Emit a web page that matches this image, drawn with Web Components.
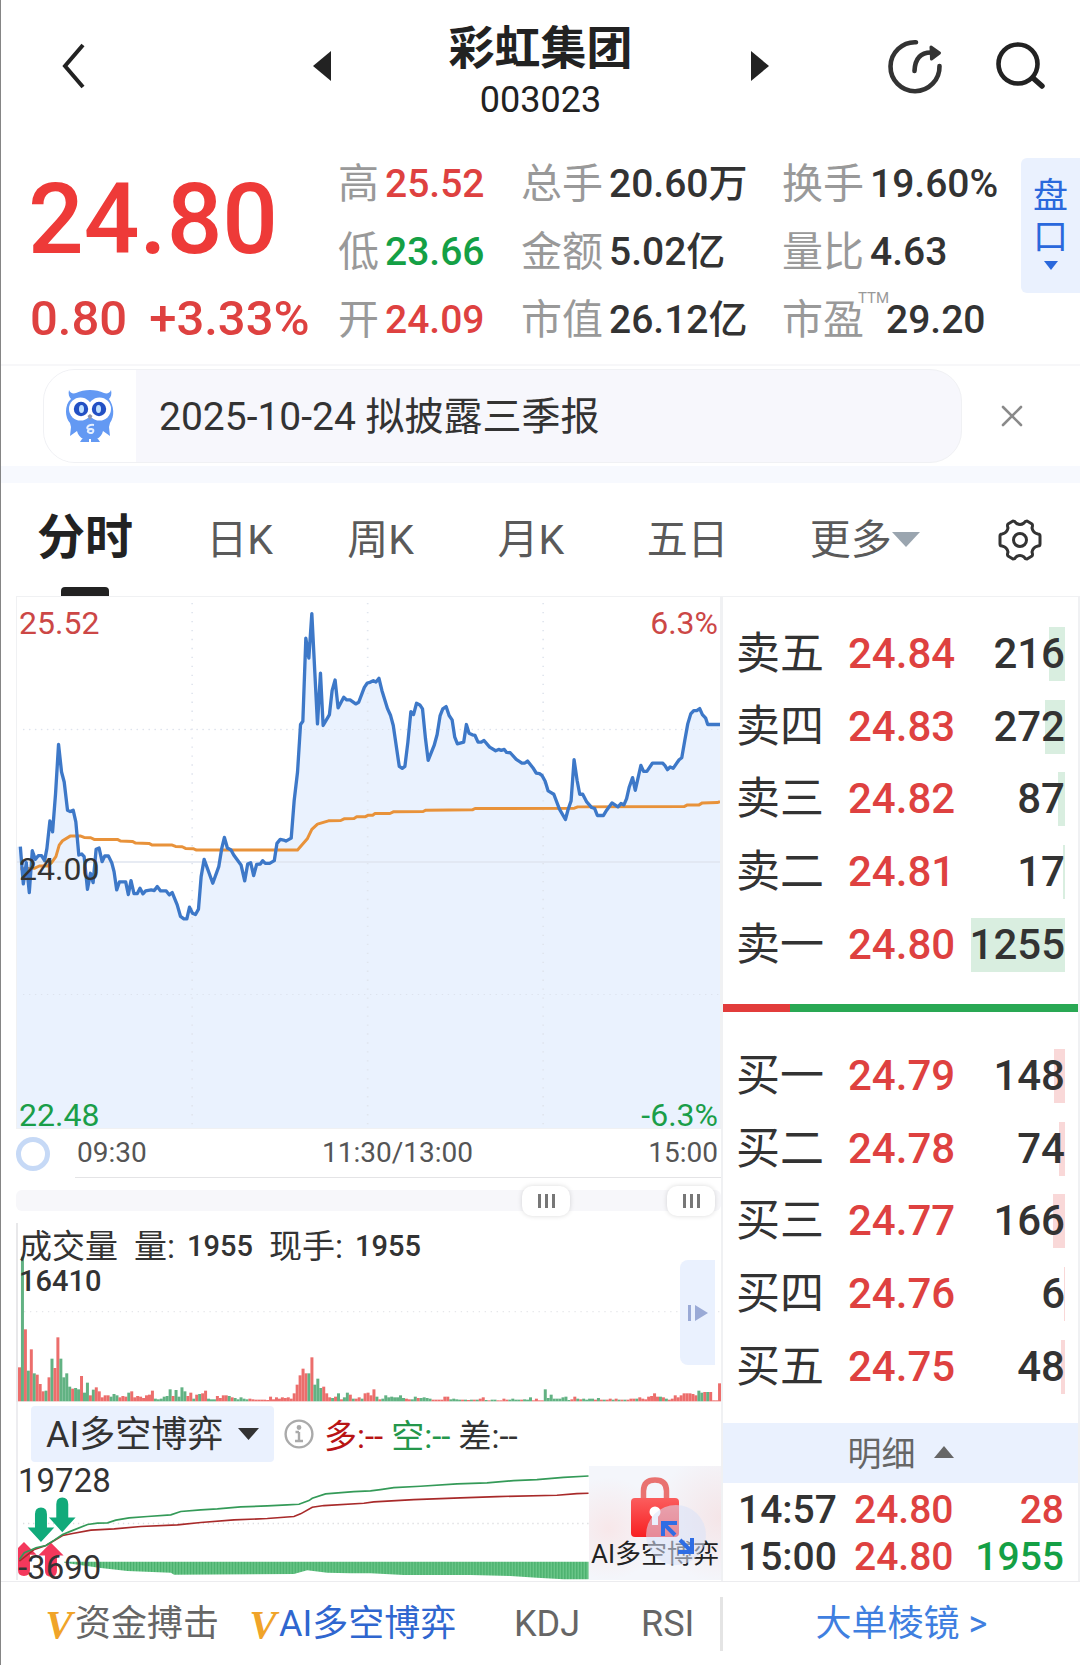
<!DOCTYPE html>
<html lang="zh-CN">
<head>
<meta charset="utf-8">
<meta name="viewport" content="width=device-width, initial-scale=1">
<title>彩虹集团 003023</title>
<style>
:root{
  --sans:Roboto,"Noto Sans CJK SC",sans-serif;
  --num:Roboto,"Noto Sans CJK SC",sans-serif;
  --ink:#333;--dark:#222;--mute:#999;--grey:#5a5a5a;
  --red:#de4140;--green:#14a045;--blue:#2a68dc;--tint:#eaf1fe;--line:#f0f1f3;
}
html,body{margin:0;background:#fff}
body{font-family:var(--sans);color:var(--ink)}
</style>
</head>
<body>
<stock-page></stock-page>
<script>
const base = `
  *{box-sizing:border-box}
  :host{display:block}
  button{font:inherit;color:inherit;background:none;border:0;padding:0;margin:0;cursor:pointer}
  a{color:inherit;text-decoration:none}
  svg{display:block}
`;
function define(name, css, html, setup){
  const tpl = document.createElement('template');
  tpl.innerHTML = `<style>${base}${css}</style>${html}`;
  customElements.define(name, class extends HTMLElement{
    constructor(){
      super();
      this.attachShadow({mode:'open'}).append(tpl.content.cloneNode(true));
    }
    connectedCallback(){
      if(setup && !this.ready){ this.ready = true; setup(this.shadowRoot, this); }
    }
  });
}

/* Header */
define('stock-header', `
  header{display:grid;grid-template-columns:1fr auto 1fr;align-items:center;height:140px;padding:0 34px 8px;color:var(--dark)}
  .back{justify-self:start;margin-left:26px}
  .name{display:flex;align-items:center;gap:118px}
  .title{text-align:center;padding-top:14px}
  h1{margin:0;font-size:46px;line-height:54px;font-weight:700}
  p{margin:0;font-size:36px;line-height:50px}
  .tools{display:flex;justify-content:flex-end;gap:52px}
`, `
  <header>
    <button class="back" aria-label="返回"><svg width="26" height="46" viewBox="0 0 26 46" fill="none" stroke="#222" stroke-width="4"><path d="M22 2 4 23 22 44"/></svg></button>
    <div class="name">
      <button aria-label="上一只"><svg width="18" height="30" viewBox="0 0 18 30"><path fill="#222" d="M18 0v30L0 15z"/></svg></button>
      <div class="title"><h1>彩虹集团</h1><p>003023</p></div>
      <button aria-label="下一只"><svg width="18" height="30" viewBox="0 0 18 30"><path fill="#222" d="M0 0v30l18-15z"/></svg></button>
    </div>
    <div class="tools">
      <button aria-label="分享"><svg width="56" height="56" viewBox="0 0 56 56" fill="none" stroke="#333" stroke-width="4.6" stroke-linecap="round"><path d="M28 4.200A24.500 24.500 0 1 0 51.500 28"/><path d="M26.500 33C27 20 33 14.500 43 14.500"/><path d="M43 9 51.500 15 43.500 21z" fill="#333" stroke-width="3" stroke-linejoin="round"/></svg></button>
      <button aria-label="搜索"><svg width="50" height="50" viewBox="0 0 50 50" fill="none" stroke="#222" stroke-width="4.600" stroke-linecap="round"><circle cx="22" cy="23" r="19.500"/><path d="m37 37 9 8" stroke-width="5.500"/></svg></button>
    </div>
  </header>
`);

/* One label and value of the quote grid */
define('quote-stat', `
  :host{display:flex;align-items:center;gap:6px;line-height:60px;white-space:nowrap}
  :host([tone=up]) .v{color:var(--red)}
  :host([tone=down]) .v{color:var(--green)}
  .k{position:relative;color:var(--mute);font-size:41px}
  .v{color:var(--ink);font:500 39px/60px var(--num)}
  sup{position:absolute;left:100%;top:0;margin-left:-6px;font-size:15px;line-height:16px}
  :host([note]) .v{margin-left:16px}
`, `<span class="k"><slot name="label"></slot></span><span class="v"><slot></slot></span>`, (root, host) => {
  if(host.hasAttribute('note')){
    const s = document.createElement('sup');
    s.textContent = host.getAttribute('note');
    root.querySelector('.k').append(s);
  }
});

define('quote-board', `
  section{display:grid;grid-template-columns:310px 1fr 59px;height:224px;padding-left:27px}
  .price{display:flex;flex-direction:column;padding-top:24px;color:#ee3a38;font-family:var(--num);font-weight:500}
  .last{font-size:98px;line-height:112px}
  .chg{display:flex;gap:22px;color:var(--red);font-size:49px;line-height:64px;padding:11px 0 0 2px}
  .stats{display:grid;grid-template-columns:183px 261px auto;justify-content:start;align-content:start;row-gap:8px;padding-top:14px}
  .side{display:flex;flex-direction:column;align-items:center;justify-content:center;gap:6px;width:59px;height:135px;margin-top:18px;padding-bottom:3px;background:var(--tint);border-radius:6px 0 0 6px;color:var(--blue);font-size:35px;line-height:35px}
`, `
  <section>
    <div class="price"><span class="last">24.80</span><div class="chg"><span>0.80</span><span>+3.33%</span></div></div>
    <div class="stats">
      <quote-stat tone="up"><span slot="label">高</span>25.52</quote-stat>
      <quote-stat><span slot="label">总手</span>20.60万</quote-stat>
      <quote-stat><span slot="label">换手</span>19.60%</quote-stat>
      <quote-stat tone="down"><span slot="label">低</span>23.66</quote-stat>
      <quote-stat><span slot="label">金额</span>5.02亿</quote-stat>
      <quote-stat><span slot="label">量比</span>4.63</quote-stat>
      <quote-stat tone="up"><span slot="label">开</span>24.09</quote-stat>
      <quote-stat><span slot="label">市值</span>26.12亿</quote-stat>
      <quote-stat note="TTM"><span slot="label">市盈</span>29.20</quote-stat>
    </div>
    <button class="side"><span>盘</span><span>口</span><svg width="14" height="9" viewBox="0 0 14 9"><path fill="#2a68dc" d="M0 0h14L7 9z"/></svg></button>
  </section>
`);

/* Announcement strip */
define('news-strip', `
  aside{display:flex;align-items:center;height:102px;padding:0 56px 0 42px;border-top:2px solid #f7f7f9;gap:38px}
  a{flex:1;display:flex;height:94px;border:1px solid #f0f1f4;border-radius:32px;overflow:hidden;background:#f7f7fc}
  .owl{width:92px;display:grid;place-items:center;background:#fff}
  .txt{padding-left:23px;font-size:39px;line-height:95px}
  .band{height:17px;background:#f7f9fe}
`, `
  <aside>
    <a href="#news"><span class="owl"><svg width="54" height="58" viewBox="0 0 54 58">
      <path fill="#6399f3" d="M6 3c1 3 4 4 7 3 8-4 20-4 28 0 3 1 6 0 7-3 1 4 0 7-2 9 5 7 6 17 1 24l-1 4 1 9-7-5c-1 4-3 6-6 8h1l2 3h-9v-3h-2v3h-9l2-3h1c-3-2-5-4-6-8l-7 5 1-9-1-4C2 31 1 18 8 12 6 10 5 7 6 3z"/>
      <circle cx="17.500" cy="22" r="11.500" fill="#fff"/><circle cx="36.500" cy="22" r="11.500" fill="#fff"/>
      <circle cx="18" cy="22" r="7.200" fill="#2250c4"/><circle cx="36" cy="22" r="7.200" fill="#2250c4"/>
      <ellipse cx="18.500" cy="22" rx="2.500" ry="4" fill="#bfe0ff"/><ellipse cx="35.500" cy="22" rx="2.500" ry="4" fill="#bfe0ff"/>
      <path fill="#8d93a8" d="m24.500 29 2.500-2 2.500 2-2.500 4z"/>
      <path d="M31 38c-7-1-9 5-4 4s4 5 0 4-2-4 2-4" fill="none" stroke="#e6f0ff" stroke-width="2"/>
    </svg></span><span class="txt">2025-10-24 拟披露三季报</span></a>
    <button aria-label="关闭"><svg width="24" height="24" viewBox="0 0 24 24" stroke="#8a8a8a" stroke-width="2.600" stroke-linecap="round"><path d="m3 3 18 18M21 3 3 21"/></svg></button>
  </aside>
  <div class="band"></div>
`);

/* Chart period tabs */
define('period-tabs', `
  nav{display:grid;grid-template-columns:169fr 141fr 150fr 149fr 163fr 188fr 44px;align-items:stretch;height:113px;padding:0 38px 0 36px;color:var(--grey);font-size:41px;line-height:110px}
  button{display:flex;align-items:center;justify-self:start}
  .on{flex-direction:column;color:#222;font-size:48px;font-weight:700}
  .on i{width:48px;height:9px;border-radius:4px 4px 0 0;background:#222;margin-top:-6px}
`, `
  <nav>
    <button class="on">分时<i></i></button><button>日K</button><button>周K</button><button>月K</button><button>五日</button>
    <button>更多<svg width="28" height="15" viewBox="0 0 28 15"><path fill="#9aa5af" d="M0 0h28L14 15z"/></svg></button>
    <button aria-label="设置"><svg width="44" height="44" viewBox="0 0 44 44" fill="none" stroke="#333" stroke-width="3" stroke-linejoin="round"><path d="M15 3q2 0 3 2 4 3 8 0 1-2 3-2l5 3q1 1 0 4 1 5 6 6 2 0 2 2v8q0 2-2 2-5 1-6 6 1 3 0 4l-5 3q-2 0-3-2-4-3-8 0-1 2-3 2l-5-3q-1-1 0-4-1-5-6-6-2 0-2-2v-8q0-2 2-2 5-1 6-6-1-3 0-4z"/><circle cx="22" cy="22" r="6.500"/></svg></button>
  </nav>
`);

/* Intraday price line with its average */
define('price-chart', `
  figure{display:grid;margin:0;height:533px;border:1px solid var(--line)}
  svg,.lab{grid-area:1/1}
  svg{width:100%;height:531px}
  .lab{display:flex;flex-direction:column;justify-content:space-between;padding:11px 2px 0;height:533px;font:32px/30px var(--num)}
  .lab div{display:flex;justify-content:space-between}
  .up{color:#cc4746}.dn{color:#1a9e49}
  .axis{display:flex;align-items:center;gap:25px;height:49px;color:#555;font:28px/48px var(--num)}
  .ring{width:34px;height:34px;border:5px solid #c6d9f6;border-radius:50%}
  .t{flex:1;display:flex;justify-content:space-between;border-bottom:1px solid #e4e4e6;padding:0 3px 0 2px;height:49px}
`, `
  <figure>
    <svg viewBox="48 18 2115 1599" preserveAspectRatio="none" fill="none">
      <g stroke="#eaebef" stroke-width="4" stroke-dasharray="4 14"><path d="M66 417H2160"/><path d="M66 1215H2160"/></g>
      <path class="area" fill="#eaf2fe"/>
      <g stroke="#e0e5ee" stroke-width="5" stroke-dasharray="4 23"><path d="M575 36V1610M1103 36V1610M1631 36V1610"/></g>
      <path stroke="#dde3ee" stroke-width="3" stroke-dasharray="4 14" d="M66 417H2160M66 1215H2160"/>
      <path stroke="#dfe5ef" stroke-width="4" d="M48 816H2163"/>
      <path class="avg" stroke="#e8923a" stroke-width="9" stroke-linejoin="round"/>
      <path class="px" stroke="#3d78c8" stroke-width="10" stroke-linejoin="round"/>
    </svg>
    <div class="lab">
      <div><span class="up">25.52</span><span class="up">6.3%</span></div>
      <div><span>24.00</span></div>
      <div><span class="dn">22.48</span><span class="dn">-6.3%</span></div>
    </div>
  </figure>
  <div class="axis"><span class="ring"></span><div class="t"><span>09:30</span><span>11:30/13:00</span><span>15:00</span></div></div>
`, root => {
  const am = '58,770 67,882 76,818 85,908 94,782 103,808 112,797 122,797 131,812 138,775 147,692 155,725 164,610 173,462 182,545 190,575 200,660 208,664 217,660 225,695 234,795 243,792 250,800 260,898 269,850 277,878 286,778 295,774 304,815 312,798 323,798 333,818 340,845 348,900 356,876 375,876 383,914 391,872 400,911 410,911 418,895 427,912 435,903 452,900 461,902 470,890 480,903 497,903 506,915 515,908 530,945 540,980 550,987 559,987 567,952 576,970 585,974 594,958 602,860 611,808 637,880 655,830 664,775 672,742 681,774 692,780 700,795 722,825 733,873 742,822 751,818 760,857 769,823 780,822 787,812 795,820 808,820 822,812 830,760 840,748 850,750 857,753 873,744 882,630 892,545 901,402 908,392 917,142 926,202 935,68 944,245 952,400 961,247 969,405 988,372 996,300 1005,268 1014,352 1031,320 1040,328 1050,328 1067,340 1076,335 1093,290 1102,277';
  const pm = '0,275 10,270 18,274 27,263 36,300 53,355 62,375 70,405 88,528 97,534 105,528 114,455 123,363 131,372 140,338 150,343 158,355 167,445 175,510 193,465 202,432 211,375 219,355 229,348 238,375 247,388 255,440 263,460 282,455 290,402 298,428 308,433 316,435 325,455 335,455 343,450 360,470 378,481 387,477 395,480 404,477 411,486 422,487 440,507 457,518 466,518 474,512 490,532 500,548 510,550 518,556 527,573 536,602 553,612 570,657 588,688 596,658 605,632 614,508 623,570 631,612 640,612 652,635 667,652 676,655 684,676 702,676 712,660 728,638 746,650 755,640 764,644 772,625 780,590 790,562 798,600 815,525 823,543 833,543 850,518 880,518 887,525 895,538 903,530 912,534 930,508 938,502 947,450 956,400 965,370 974,360 983,360 992,354 1000,372 1010,383 1016,402 1053,402';
  const avgAm = '58,836 100,835 115,828 140,828 152,818 165,800 175,765 185,752 208,738 240,738 250,742 270,743 280,748 350,748 360,753 395,754 405,759 445,760 455,765 515,765 525,769 545,770 555,775 578,776 588,780 892,780 922,745 935,718 952,702 985,692 1022,691 1032,686 1062,685 1070,680 1095,680 1105,675';
  const avgPm = '8,675 15,670 60,670 70,665 160,664 168,660 308,659 316,655 615,654 625,650 945,649 955,644 990,644 1000,638 1045,637 1053,634';
  const shift = s => s.split(' ').map(p => { const [x, y] = p.split(','); return (+x + 1110) + ',' + y; }).join(' ');
  const px = 'M' + am + ' ' + shift(pm);
  root.querySelector('.px').setAttribute('d', px);
  root.querySelector('.area').setAttribute('d', px + 'V1617H48V770Z');
  root.querySelector('.avg').setAttribute('d', 'M' + avgAm + ' ' + shift(avgPm));
});

/* Two-handled time range */
define('range-slider', `
  :host{height:45px;display:grid;align-items:center}
  .track{grid-area:1/1;height:21px;border-radius:6px;background:#f7f7fa}
  input{grid-area:1/1;appearance:none;width:calc(100% - 2px);height:32px;margin:0;background:none;pointer-events:none;outline:0}
  input::-webkit-slider-thumb{appearance:none;pointer-events:auto;width:48px;height:30px;border-radius:10px;box-shadow:0 0 5px #00000026;
    background:linear-gradient(90deg,#777 3px,#fff 3px 7px,#777 7px 10px,#fff 10px 14px,#777 14px) center/17px 14px no-repeat #fff}
`, `<div class="track"></div>
  <input type="range" min="0" max="1000" value="773" aria-label="起始时间">
  <input type="range" min="0" max="1000" value="994" aria-label="结束时间">`);

/* Volume bars */
define('volume-chart', `
  figure{display:grid;margin:0;height:179px;border-left:2px solid #e8e8ea}
  figure>*{grid-area:1/1}
  figure>svg{width:100%;height:179px}
  figcaption{font-size:33px;line-height:35px;padding:6px 0 0 1px}
  .r{display:flex;gap:16px}
  .r span{display:flex;gap:12px}
  b{display:block;font:500 29px/35px var(--num)}
  .more{justify-self:end;align-self:start;margin:37px 6px 0 0;width:35px;height:105px;border-radius:8px 0 0 8px;background:var(--tint);display:grid;place-items:center}
`, `
  <figure>
    <svg viewBox="48 399 2115 537" preserveAspectRatio="none"><path d="M66 665H2160" stroke="#e6e7ea" stroke-width="4" stroke-dasharray="4 14"/><g class="bars"></g></svg>
    <figcaption><div class="r"><span>成交量</span><span>量: <b>1955</b></span><span>现手: <b>1955</b></span></div><b>16410</b></figcaption>
    <button class="more" aria-label="展开"><svg width="22" height="16" viewBox="0 0 22 16" fill="#9aaad6"><path d="M1 0h3v16H1zM8 0l13 8-13 8z"/></svg></button>
  </figure>
`, root => {
  // Positive heights are up minutes, negative heights are down minutes.
  const v = [102,-434,216,-92,156,-84,80,52,30,-32,72,-128,100,192,-128,-72,-84,-44,38,-40,-36,76,-26,-56,18,-35,42,30,12,18,18,-14,-22,-18,12,16,14,-26,30,12,16,14,10,18,20,32,-8,-6,-8,-14,-16,-36,16,-34,-14,-42,-30,16,26,-8,20,-22,24,32,-8,-6,-6,16,10,18,18,-16,12,-10,-6,-12,-8,-6,8,6,5,5,5,5,4,14,6,12,8,12,10,12,8,24,50,78,98,84,-84,132,-50,-68,-40,44,24,12,-10,14,-24,6,-12,-26,20,-8,8,12,-8,24,26,18,36,-14,6,-8,-18,-12,-14,-12,-12,-18,-10,8,6,-6,-14,10,-10,-12,-10,-8,5,5,5,5,14,14,-6,-8,-6,-5,5,-5,4,-5,5,-5,8,12,-4,3,-5,-5,3,3,8,5,-5,-8,-5,-5,5,-6,-5,-12,3,8,3,3,-36,-10,-20,-8,-8,-8,-12,-14,-4,6,14,-8,6,-8,-5,-8,-8,5,-10,5,-5,5,8,-5,8,-5,5,-5,5,8,8,-8,12,8,6,14,16,24,14,-14,12,-8,5,8,18,12,18,24,24,24,22,18,-32,-26,28,-28,28,3,3,54];
  const g = root.querySelector('.bars');
  v.forEach((h, i) => {
    const r = document.createElementNS('http://www.w3.org/2000/svg', 'rect');
    r.setAttribute('x', 48 + i * 2115 / v.length);
    r.setAttribute('y', 934 - Math.abs(h));
    r.setAttribute('width', 9);
    r.setAttribute('height', Math.abs(h));
    r.setAttribute('fill', h > 0 ? '#ec6e6c' : '#62b283');
    g.append(r);
  });
});

/* AI long/short indicator */
define('ai-chart', `
  :host{border-left:2px solid #ededf0}
  .bar{display:flex;align-items:center;height:64px;padding:0 0 1px 13px;font-size:33px}
  .pick{position:relative;display:flex;align-items:center}
  select{appearance:none;border:0;border-radius:4px;width:243px;height:56px;padding:3px 0 0 15px;background:var(--tint);color:var(--ink);font:36px var(--sans)}
  .pick svg{position:absolute;right:15px;pointer-events:none}
  .info{margin:0 10px 0 10px}
  .vals{display:flex;gap:8px}
  .a{color:#b81414}.b{color:#24974b}
  figure{display:grid;margin:0;height:114px;grid-template-columns:1fr 132px}
  .plot{grid-area:1/1/2/3;width:100%;height:114px}
  .lab{grid-area:1/1;display:flex;flex-direction:column;justify-content:space-between;height:117px;font-size:33px;line-height:30px}
  .lock{grid-area:1/2;position:relative;display:flex;flex-direction:column;align-items:center;height:114px;padding-top:11px;color:#222;font-size:26px;line-height:32px;
    background:radial-gradient(circle at 100% 45%,#f5d4d480,transparent 45%),radial-gradient(circle at 15% 55%,#fadcdc90,transparent 40%),#f4f6fb;white-space:nowrap}
  .lock .full{position:absolute;left:57px;top:39px}
`, `
  <div class="bar">
    <label class="pick"><select aria-label="指标"><option>AI多空博弈</option></select><svg width="21" height="12" viewBox="0 0 21 12"><path fill="#333" d="M0 0h21L10.500 12z"/></svg></label>
    <svg class="info" width="30" height="30" viewBox="0 0 30 30" fill="none" stroke="#aaa" stroke-width="2.400"><circle cx="15" cy="15" r="13.400"/><path d="M15 13v9M11.500 13H15M11 22h8"/><circle cx="15" cy="8.500" r="1.200" fill="#aaa"/></svg>
    <div class="vals"><span class="a">多:--</span><span class="b">空:--</span><span>差:--</span></div>
  </div>
  <figure>
    <svg class="plot" viewBox="51 199 2112 343" preserveAspectRatio="none" fill="none">
      <defs><pattern id="stripe" width="9" height="60" patternUnits="userSpaceOnUse"><rect width="9" height="60" fill="#6cc78a"/><rect width="4" height="60" fill="#45ad69"/></pattern></defs>
      <path d="M66 372H1765" stroke="#dcdde0" stroke-width="4" stroke-dasharray="4 11"/>
      <path d="M0-52 38-14H18V32Q18 50 0 50T-18 32V-14H-38z" fill="#f4385c" transform="translate(69 480)"/>
      <path d="M0-52 38-14H18V32Q18 50 0 50T-18 32V-14H-38z" fill="#f4385c" transform="translate(150 482)"/>
      <path d="M-18-32Q-18-52 0-52T18-32V8H40L0 52-40 8H-18z" fill="#11aa7a" transform="translate(120 376)"/>
      <path d="M-18-32Q-18-52 0-52T18-32V8H40L0 52-40 8H-18z" fill="#11aa7a" transform="translate(184 346)"/>
      <path fill="url(#stripe)" d="M190 487H1765V540H1690L1610 535 1530 530 1410 527H1210L1110 522 1050 522 980 520 920 513 880 524 520 526 510 520 380 515 300 506 190 490z"/>
      <path stroke="#a82a2a" stroke-width="5" d="M55 485 100 450 135 438 185 408 215 402 270 392 340 388 420 381 530 376 600 369 700 361 800 357 880 351 900 343 935 323 970 318 1090 311 1120 307 1240 300 1380 295 1490 291 1670 287 1730 282 1765 281"/>
      <path stroke="#349a58" stroke-width="5" d="M55 480 70 460 90 452 105 445 135 438 160 422 185 405 210 395 260 375 290 371 320 370 345 362 385 355 440 351 510 346 540 336 600 331 650 328 720 322 800 319 860 316 895 314 925 303 935 296 975 283 1060 276 1110 274 1140 270 1180 264 1260 260 1370 253 1460 250 1540 243 1610 240 1690 233 1765 229"/>
    </svg>
    <div class="lab"><span>19728</span><span>-3690</span></div>
    <div class="lock">
      <svg width="50" height="61" viewBox="0 0 50 61"><defs><linearGradient id="lk" x2="0" y2="1"><stop stop-color="#fb5d5d"/><stop offset="1" stop-color="#f81f22"/></linearGradient></defs><path d="M13.500 24V14q0-11 11.500-11t11.500 11v10" fill="none" stroke="#e97270" stroke-width="5.500"/><rect x="1" y="21" width="48" height="39" rx="4" fill="url(#lk)"/><circle cx="25" cy="35" r="5.500" fill="#fff"/><path d="M22 37h6v11h-6z" fill="#fff"/></svg>
      <span>AI多空博弈</span>
      <svg class="full" width="60" height="60" viewBox="0 0 60 60"><circle cx="30" cy="30" r="30" fill="#d8e2f8" opacity=".55"/><path d="M17 31V18h14M18 19l11 11M32 47h14V33M45 46 34 35" fill="none" stroke="#2f6de4" stroke-width="4"/></svg>
    </div>
  </figure>
`);

/* Five levels of asks and bids */
define('order-book', `
  table{width:100%;height:363px;border-collapse:collapse;table-layout:fixed}
  .ask{margin-top:21px}
  th,td{padding:0;font-weight:500;text-align:left;font-size:42px;line-height:54px;font-family:var(--num);white-space:nowrap}
  th{width:125px;padding-left:13px;font-family:var(--sans);font-size:44px;font-weight:400}
  td.p{width:112px;color:var(--red)}
  td.q{padding-right:13px}
  .q span{display:block;text-align:right;background:linear-gradient(var(--depth),var(--depth)) right/var(--w) 54px no-repeat}
  .ask{--depth:#d9eee0}.bid{--depth:#f9d8d8}
  .ratio{display:flex;height:8px;margin:23px 0 28px}
  .ratio i{width:19%;background:#e23c3b}.ratio i+i{flex:1;background:#29a854}
`, `
  <table class="ask" aria-label="卖盘"></table>
  <div class="ratio"><i></i><i></i></div>
  <table class="bid" aria-label="买盘"></table>
`, root => {
  const row = ([n, p, q, w]) => `<tr><th scope="row">${n}</th><td class="p">${p}</td><td class="q"><span style="--w:${w}px">${q}</span></td></tr>`;
  root.querySelector('.ask').innerHTML = [['卖五','24.84',216,16],['卖四','24.83',272,20],['卖三','24.82',87,7],['卖二','24.81',17,2],['卖一','24.80',1255,94]].map(row).join('');
  root.querySelector('.bid').innerHTML = [['买一','24.79',148,11],['买二','24.78',74,6],['买三','24.77',166,12],['买四','24.76',6,1],['买五','24.75',48,4]].map(row).join('');
});

/* Latest trades */
define('trade-list', `
  :host{margin-top:20px}
  button{display:flex;width:100%;height:60px;align-items:center;justify-content:center;gap:18px;padding-bottom:3px;background:var(--tint);color:#666;font-size:34px}
  table{width:100%;border-collapse:collapse;table-layout:fixed;margin-top:4px}
  td{padding:0;font:500 39px/47px var(--num);height:47px}
  td:nth-child(1){padding-left:15px;width:131px}
  td:nth-child(2){width:110px;color:var(--red)}
  td:nth-child(3){text-align:right;padding-right:14px}
  td.up{color:var(--red)}td.dn{color:var(--green)}
`, `
  <button>明细<svg width="20" height="12" viewBox="0 0 20 12"><path fill="#666" d="M0 12h20L10 0z"/></svg></button>
  <table aria-label="成交明细">
    <tr><td>14:57</td><td>24.80</td><td class="up">28</td></tr>
    <tr><td>15:00</td><td>24.80</td><td class="dn">1955</td></tr>
  </table>
`);

/* Indicator switcher at the foot */
define('indicator-tabs', `
  nav{display:grid;grid-template-columns:722px 1fr;height:83px;align-items:center;color:#666;font-size:36px}
  .l{display:grid;grid-template-columns:204px 267px 127px 1fr;padding-left:42px;height:54px;align-items:center;border-right:3px solid #e4e4e4}
  .l button{display:flex;align-items:center;line-height:54px}
  .on{color:#2f66cf}
  b{width:32px;color:#f0a429;font:italic 700 41px/54px "Liberation Serif",serif}
  a{color:#3f7fe0;text-align:center;line-height:54px}
`, `
  <nav>
    <div class="l"><button><b>V</b>资金搏击</button><button class="on"><b>V</b>AI多空博弈</button><button>KDJ</button><button>RSI</button></div>
    <a href="#prism">大单棱镜 &gt;</a>
  </nav>
`);

define('stock-page', `
  :host{border-left:1px solid #858585}
  main{display:grid;grid-template-columns:705fr 359fr;padding-left:15px;border-bottom:1px solid #ececef}
  .right{border:1px solid var(--line);border-width:1px 2px 0}
`, `
  <stock-header></stock-header>
  <quote-board></quote-board>
  <news-strip></news-strip>
  <period-tabs></period-tabs>
  <main>
    <div class="left"><price-chart></price-chart><range-slider></range-slider><volume-chart></volume-chart><ai-chart></ai-chart></div>
    <div class="right"><order-book></order-book><trade-list></trade-list></div>
  </main>
  <indicator-tabs></indicator-tabs>
`);
</script>
</body>
</html>
